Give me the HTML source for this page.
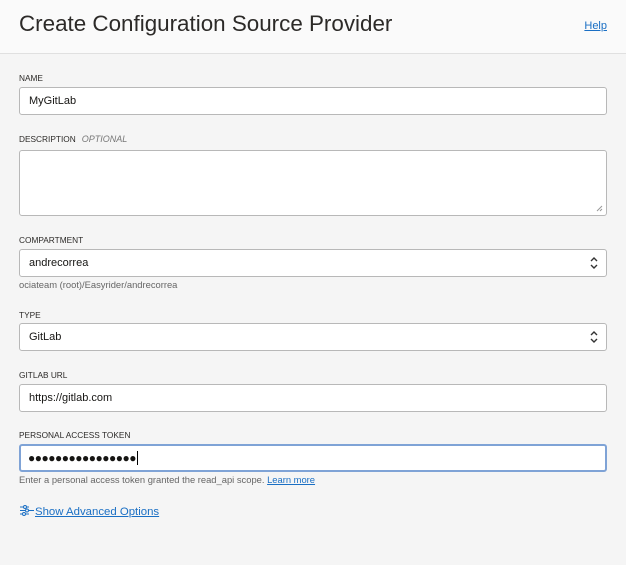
<!DOCTYPE html>
<html><head><style>
body{margin:0;width:626px;height:565px;background:#f5f5f5;font-family:"Liberation Sans",sans-serif;position:relative;overflow:hidden;color:#161513}
.hd{position:absolute;left:0;top:0;width:626px;height:53px;background:#fafafa;border-bottom:1px solid #e0e0e0}
.hd h1{position:absolute;left:19px;top:11px;margin:0;font-weight:normal;font-size:22.4px;color:#2c2a28}
.help{position:absolute;right:19px;top:20px;font-size:11px;color:#1a6fc4;text-decoration:underline}
.lb{position:absolute;left:19px;font-size:8.3px;color:#2c2a28;text-transform:uppercase}
.lb i{color:#777;font-size:9px;margin-left:6px}
.in{position:absolute;left:19px;width:588px;height:26px;background:#fff;border:1px solid #b8b8b8;border-radius:3px;box-sizing:border-box;font-size:11px;padding:7px 0 0 9px;color:#161513}
.hint{position:absolute;left:19px;font-size:9.4px;color:#666}
.chev{position:absolute;right:7px;top:5px}
</style></head><body>
<div class="hd"><h1>Create Configuration Source Provider</h1><span class="help">Help</span></div>
<div class="lb" style="top:73px">Name</div>
<div class="in" style="top:87px;height:28px">MyGitLab</div>
<div class="lb" style="top:134px">Description<i>OPTIONAL</i></div>
<div class="in" style="top:150px;height:66px"><svg style="position:absolute;right:3px;bottom:3px" width="7" height="7"><path d="M6 1L1 6M6 4L4 6" stroke="#999"/></svg></div>
<div class="lb" style="top:235px">Compartment</div>
<div class="in" style="top:249px;height:28px">andrecorrea<svg class="chev" width="10" height="16"><path d="M2 6L5 3L8 6M2 10L5 13L8 10" stroke="#333" stroke-width="1.4" fill="none"/></svg></div>
<div class="hint" style="top:279px">ociateam (root)/Easyrider/andrecorrea</div>
<div class="lb" style="top:310px">Type</div>
<div class="in" style="top:323px;height:28px">GitLab<svg class="chev" width="10" height="16"><path d="M2 6L5 3L8 6M2 10L5 13L8 10" stroke="#333" stroke-width="1.4" fill="none"/></svg></div>
<div class="lb" style="top:370px">GitLab URL</div>
<div class="in" style="top:384px;height:28px">https://gitlab.com</div>
<div class="lb" style="top:430px">Personal Access Token</div>
<div class="in" style="top:444px;height:28px;border:2px solid #7fa3d6;padding:5px 0 0 7px;font-size:12px;letter-spacing:-0.5px">●●●●●●●●●●●●●●●●<span style="border-left:1px solid #000;margin-left:1px"></span></div>
<div class="hint" style="top:474px">Enter a personal access token granted the read_api scope. <span style="color:#1a6fc4;text-decoration:underline">Learn more</span></div>
<div style="position:absolute;left:19px;top:504px;font-size:11.4px;color:#1a6fc4"><svg width="16" height="13" style="vertical-align:-2px"><g stroke="#1a6fc4" fill="none"><path d="M1 3H4M8 3H10M1 10H3M7 10H10M1 6.5H6M10 6.5H15"/><circle cx="6" cy="3" r="1.5"/><circle cx="5" cy="10" r="1.5"/><circle cx="8" cy="6.5" r="1.5"/></g></svg><span style="text-decoration:underline">Show Advanced Options</span></div>
</body></html>
